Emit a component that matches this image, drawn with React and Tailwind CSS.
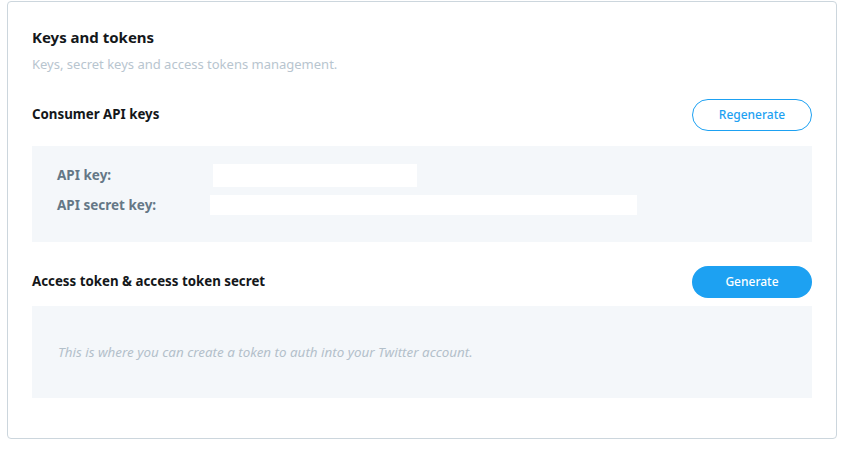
import React from 'react';

const font = { fontFamily: '"Noto Sans", "Open Sans", sans-serif' };

const SectionHeader = ({ title, children }) => (
  <div className="flex items-center justify-between">
    <h3 className="text-[13.3px] font-bold text-[#14171a]">{title}</h3>
    {children}
  </div>
);

const App = () => {
  return (
    <div className="w-[856px] h-[460px] bg-white pl-[7px] pt-px" style={font}>
      {/* Card */}
      <div className="w-[830px] h-[438px] border border-[#ccd6dd] rounded-[4px] px-6 pt-[25px]">
        <h2 className="text-[15px] leading-5 font-bold text-[#14171a]">Keys and tokens</h2>
        <p className="mt-[8px] text-[13px] leading-[18px] text-[#b8c5cf]">
          Keys, secret keys and access tokens management.
        </p>

        {/* Consumer API keys */}
        <div className="mt-[26px]">
          <SectionHeader title="Consumer API keys">
            <button
              type="button"
              className="w-[120px] h-[32px] rounded-full border border-[#1da1f2] text-[#1da1f2] text-[12px] font-medium"
            >
              Regenerate
            </button>
          </SectionHeader>
          <div className="mt-[15px] h-[96px] bg-[#f4f7fa] pt-[18px] pl-[25px]">
            <div className="flex items-center h-[23px]">
              <span className="w-[156px] text-[13.5px] font-bold text-[#657786]">API key:</span>
              <div className="w-[204px] h-[23px] bg-white" />
            </div>
            <div className="flex items-center h-[20px] mt-[8px]">
              <span className="w-[153px] text-[13.5px] font-bold text-[#657786]">API secret key:</span>
              <div className="w-[427px] h-[20px] bg-white" />
            </div>
          </div>
        </div>

        {/* Access token */}
        <div className="mt-[24px]">
          <SectionHeader title="Access token & access token secret">
            <button
              type="button"
              className="w-[120px] h-[32px] rounded-full bg-[#1da1f2] text-white text-[12px] font-medium"
            >
              Generate
            </button>
          </SectionHeader>
          <div className="mt-[8px] h-[92px] bg-[#f4f7fa] flex items-center pl-[26px]">
            <p className="text-[13.4px] italic text-[#b3c0ca]">
              This is where you can create a token to auth into your Twitter account.
            </p>
          </div>
        </div>
      </div>
    </div>
  );
};

export default App;
